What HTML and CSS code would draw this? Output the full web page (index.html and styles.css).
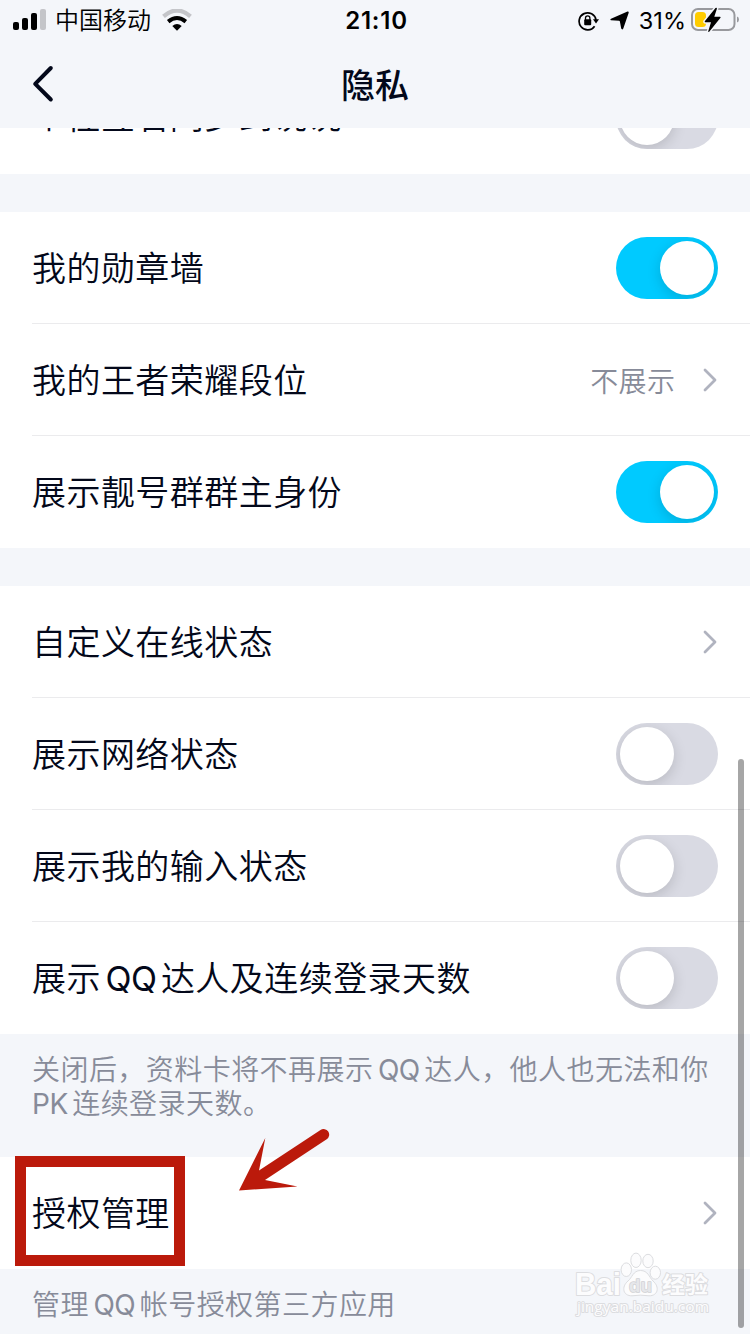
FILE: index.html
```html
<!DOCTYPE html>
<html lang="zh-CN">
<head>
  <meta charset="UTF-8" />
  <meta name="viewport" content="width=device-width, initial-scale=1.0" />
  <title>隐私</title>
  <link rel="stylesheet" href="styles.css">
</head>
<body>
  <div class="screen">
    <header class="header">
      <div class="status-bar">
        <div class="status-left">
          <svg class="signal" width="33" height="22" viewBox="0 0 33 22">
            <rect x="0" y="13" width="6" height="8" rx="2" />
            <rect x="9" y="9" width="6" height="12" rx="2" />
            <rect x="18" y="4" width="6" height="17" rx="2" />
            <rect x="27" y="0" width="6" height="21" rx="2" fill="#c4c5c9" />
          </svg>
          <span class="carrier">中国移动</span>
          <svg class="wifi" width="30" height="22" viewBox="0 0 30 22">
            <path d="M1.500 7.400Q15-4.400 28.500 7.400" fill="none" stroke="#c4c5c9" stroke-width="4.200" />
            <path d="M6.200 12.600Q15 5.500 23.800 12.600" fill="none" stroke="#000" stroke-width="4" />
            <path d="M10.300 17Q15 13.200 19.700 17L15 21.700Z" />
          </svg>
        </div>
        <span class="time">21:10</span>
        <div class="status-right">
          <svg class="lock" width="21" height="20" viewBox="0 0 21 20">
            <path d="M16.600 15.200A8.500 8.500 0 1 1 18 9" fill="none" stroke="#000" stroke-width="1.700" />
            <path d="M15 8.300h6l-3 4.200z" />
            <rect x="6.200" y="8.300" width="7" height="6" rx="1" />
            <path d="M7.500 9V7a2.200 2.200 0 0 1 4.400 0V9" fill="none" stroke="#000" stroke-width="1.300" />
          </svg>
          <svg class="location" width="19" height="19" viewBox="0 0 19 19">
            <path d="M17.500.600Q18.800.200 18.700 1.700L13.300 17.500Q12.200 19.200 11.200 17.600L9.900 10.500Q9.700 9.800 9 9.700L1 9.300Q-.300 8.700 1 7.700Z" />
          </svg>
          <span class="percent">31%</span>
          <svg class="battery" width="49" height="26" viewBox="0 0 49 26">
            <rect x="1" y="2" width="42.500" height="21" rx="6" fill="none" stroke="#98999d" stroke-width="2" />
            <path d="M46 9.500q2 .700 2 3t-2 3z" fill="#98999d" />
            <rect x="4" y="5" width="11" height="15" rx="3.500" fill="#ffcc00" />
            <path d="M24.500 1L13.800 14.200Q13.300 15.300 14.500 15.300H20L17.300 24Q17.100 25.600 18.400 24.400L29.500 10.700Q30 9.700 28.800 9.700H23.300L25.900 1.800Q26 0 24.500 1Z" stroke="#f4f6fa" stroke-width="3" paint-order="stroke" />
          </svg>
        </div>
      </div>
      <div class="nav">
        <svg class="back" width="22" height="38" viewBox="0 0 22 38">
          <path d="M18.800 3L3.200 18.800L18.800 34.500" />
        </svg>
        <h1>隐私</h1>
      </div>
    </header>

    <main class="list">
      <section class="group scrolled">
        <div class="row"><span>个性签名同步到说说</span><i class="switch"></i></div>
      </section>

      <section class="group">
        <div class="row"><span>我的勋章墙</span><i class="switch on"></i></div>
        <div class="row">
          <span>我的王者荣耀段位</span>
          <div class="more">
            <span class="value">不展示</span>
            <svg class="arrow" width="16" height="24" viewBox="0 0 16 24"><path d="M3 2L13 12L3 22" /></svg>
          </div>
        </div>
        <div class="row"><span>展示靓号群群主身份</span><i class="switch on"></i></div>
      </section>

      <section class="group">
        <div class="row">
          <span>自定义在线状态</span>
          <svg class="arrow" width="16" height="24" viewBox="0 0 16 24"><path d="M3 2L13 12L3 22" /></svg>
        </div>
        <div class="row"><span>展示网络状态</span><i class="switch"></i></div>
        <div class="row"><span>展示我的输入状态</span><i class="switch"></i></div>
        <div class="row"><span>展示<b class="latin">QQ</b>达人及连续登录天数</span><i class="switch"></i></div>
      </section>
      <p class="note">关闭后，资料卡将不再展示<b class="latin">QQ</b>达人，他人也无法和你<br><b class="latin first">PK</b>连续登录天数。</p>

      <section class="group last">
        <div class="row">
          <span>授权管理</span>
          <svg class="arrow" width="16" height="24" viewBox="0 0 16 24"><path d="M3 2L13 12L3 22" /></svg>
          <div class="mark"></div>
          <svg class="pointer" width="94" height="66" viewBox="0 0 94 66">
            <path d="M1 63.500L27.300 11L21 43.500L82.500 3A5.500 5.500 0 0 1 88.700 12.300L27 53L59.500 59.500Z" />
          </svg>
        </div>
      </section>
      <p class="note">管理<b class="latin">QQ</b>帐号授权第三方应用</p>
    </main>

    <div class="scrollbar"></div>

    <svg class="watermark" width="142" height="70" viewBox="0 0 142 70">
      <ellipse cx="54.300" cy="18.700" rx="5.200" ry="6.800" />
      <ellipse cx="64" cy="9.300" rx="5.200" ry="7.200" />
      <ellipse cx="76" cy="10" rx="5.200" ry="6.700" />
      <ellipse cx="83.300" cy="21.700" rx="5.200" ry="6.500" />
      <path d="M68.500 19.500C61 19.500 60 27 56 30C49 36 51 45 60 44.800Q68.500 43.500 77 44.800C86 45 88 36 81 30C77 26 76 19.500 68.500 19.500Z" />
      <text x="3" y="44" class="brand" textLength="46" lengthAdjust="spacingAndGlyphs">Bai</text>
      <text x="57" y="40.500" class="du" textLength="23" lengthAdjust="spacingAndGlyphs">du</text>
      <text x="90" y="42" class="jingyan" textLength="46">经验</text>
      <text x="5" y="61" class="site" textLength="132" lengthAdjust="spacingAndGlyphs">jingyan.baidu.com</text>
    </svg>
  </div>
</body>
</html>
```
FILE: styles.css
```css
* {
  box-sizing: border-box;
}
body {
  margin: 0;
  font-family: Inter, "Noto Sans CJK SC", sans-serif;
  background: #f4f6fa;
  color: #03081a;
}
svg {
  display: block;
  flex: none;
}
.screen {
  position: relative;
  width: 750px;
  height: 1334px;
  overflow: hidden;
  display: flex;
  flex-direction: column;
}
.header {
  height: 128px;
  flex: none;
}
.status-bar {
  height: 40px;
  padding: 0 10px 0 13px;
  display: grid;
  grid-template-columns: 1fr auto 1fr;
  align-items: center;
  color: #000;
}
.status-left,
.status-right {
  height: 40px;
  display: flex;
  align-items: center;
}
.status-right {
  justify-content: flex-end;
}
.carrier {
  margin: 0 11px 0 9px;
  padding-top: 2px;
  font-size: 24px;
  font-weight: 350;
  line-height: 40px;
}
.time {
  padding-top: 2px;
  font-size: 24px;
  font-weight: 600;
  letter-spacing: 0.8px;
  line-height: 38px;
}
.lock {
  margin-top: 1px;
}
.location {
  margin: 1px 10px 0 11px;
}
.percent {
  margin-right: 5px;
  padding-top: 1px;
  font-size: 23.5px;
  line-height: 40px;
}
.nav {
  height: 88px;
  padding: 0 32px;
  display: grid;
  grid-template-columns: 1fr auto 1fr;
  align-items: center;
}
.back path {
  fill: none;
  stroke: #03081a;
  stroke-width: 4;
  stroke-linecap: round;
  stroke-linejoin: round;
}
h1 {
  margin: 0;
  padding-top: 3px;
  font-size: 34px;
  font-weight: 500;
  line-height: 48px;
}
.list {
  flex: 1;
  overflow: hidden;
}
.group {
  margin-bottom: 38px;
  padding-left: 32px;
  background: #fff;
}
.group.scrolled {
  margin-top: -66px;
}
.row {
  position: relative;
  height: 112px;
  padding-right: 32px;
  display: flex;
  align-items: center;
  justify-content: space-between;
  border-bottom: 1px solid #ebebed;
  font-size: 34px;
  font-weight: 350;
  letter-spacing: 0.45px;
  white-space: nowrap;
}
.row > span {
  padding-bottom: 3px;
}
.row:last-child {
  border-bottom: none;
}
.scrolled .row > span {
  padding-bottom: 8px;
}
.latin {
  margin: 0 4.5px;
  font-weight: 400;
  letter-spacing: -0.5px;
}
.latin.first {
  margin-left: 0;
}
.switch {
  width: 102px;
  height: 62px;
  padding: 4px;
  display: flex;
  overflow: hidden;
  border-radius: 31px;
  background: #d9dae3;
}
.switch::before {
  content: "";
  width: 54px;
  height: 54px;
  border-radius: 50%;
  background: #fff;
  box-shadow: 0 4px 14px rgba(0, 0, 0, 0.15);
}
.switch.on {
  justify-content: flex-end;
  background: #00caff;
}
.more {
  display: flex;
  align-items: center;
  gap: 26px;
}
.value {
  color: #878b99;
  font-size: 28px;
}
.arrow {
  margin-right: 0.5px;
}
.arrow path {
  fill: none;
  stroke: #b0b3bf;
  stroke-width: 2.8;
  stroke-linecap: round;
  stroke-linejoin: round;
}
.note {
  margin: -38px 0 0;
  padding: 19px 32px 0;
  height: 123px;
  color: #878b99;
  font-size: 28px;
  font-weight: 350;
  letter-spacing: 0.45px;
  line-height: 34px;
  white-space: nowrap;
}
.mark {
  position: absolute;
  left: -17px;
  top: -1px;
  width: 170px;
  height: 110px;
  border: 11px solid #bb1a0b;
}
.pointer {
  position: absolute;
  left: 206px;
  top: -30px;
  fill: #bb1a0b;
}
.scrollbar {
  position: absolute;
  left: 738px;
  top: 759px;
  width: 6px;
  height: 569px;
  border-radius: 3px;
  background: rgba(0, 0, 0, 0.35);
}
.watermark {
  position: absolute;
  left: 572px;
  top: 1251px;
  fill: #fcfcfd;
  stroke: #dcdde0;
  stroke-width: 1;
}
.watermark text {
  stroke-width: 2;
  stroke-linejoin: round;
  paint-order: stroke;
}
.brand {
  font: bold 31px "Liberation Sans", sans-serif;
}
.watermark .du {
  font: bold 19px "Liberation Sans", sans-serif;
  fill: #e6e7ea;
  stroke: #d0d1d4;
  stroke-width: 1.5;
}
.jingyan {
  font: bold 23px "Noto Sans CJK SC", sans-serif;
}
.site {
  font: 15px "Open Sans", sans-serif;
}
```
